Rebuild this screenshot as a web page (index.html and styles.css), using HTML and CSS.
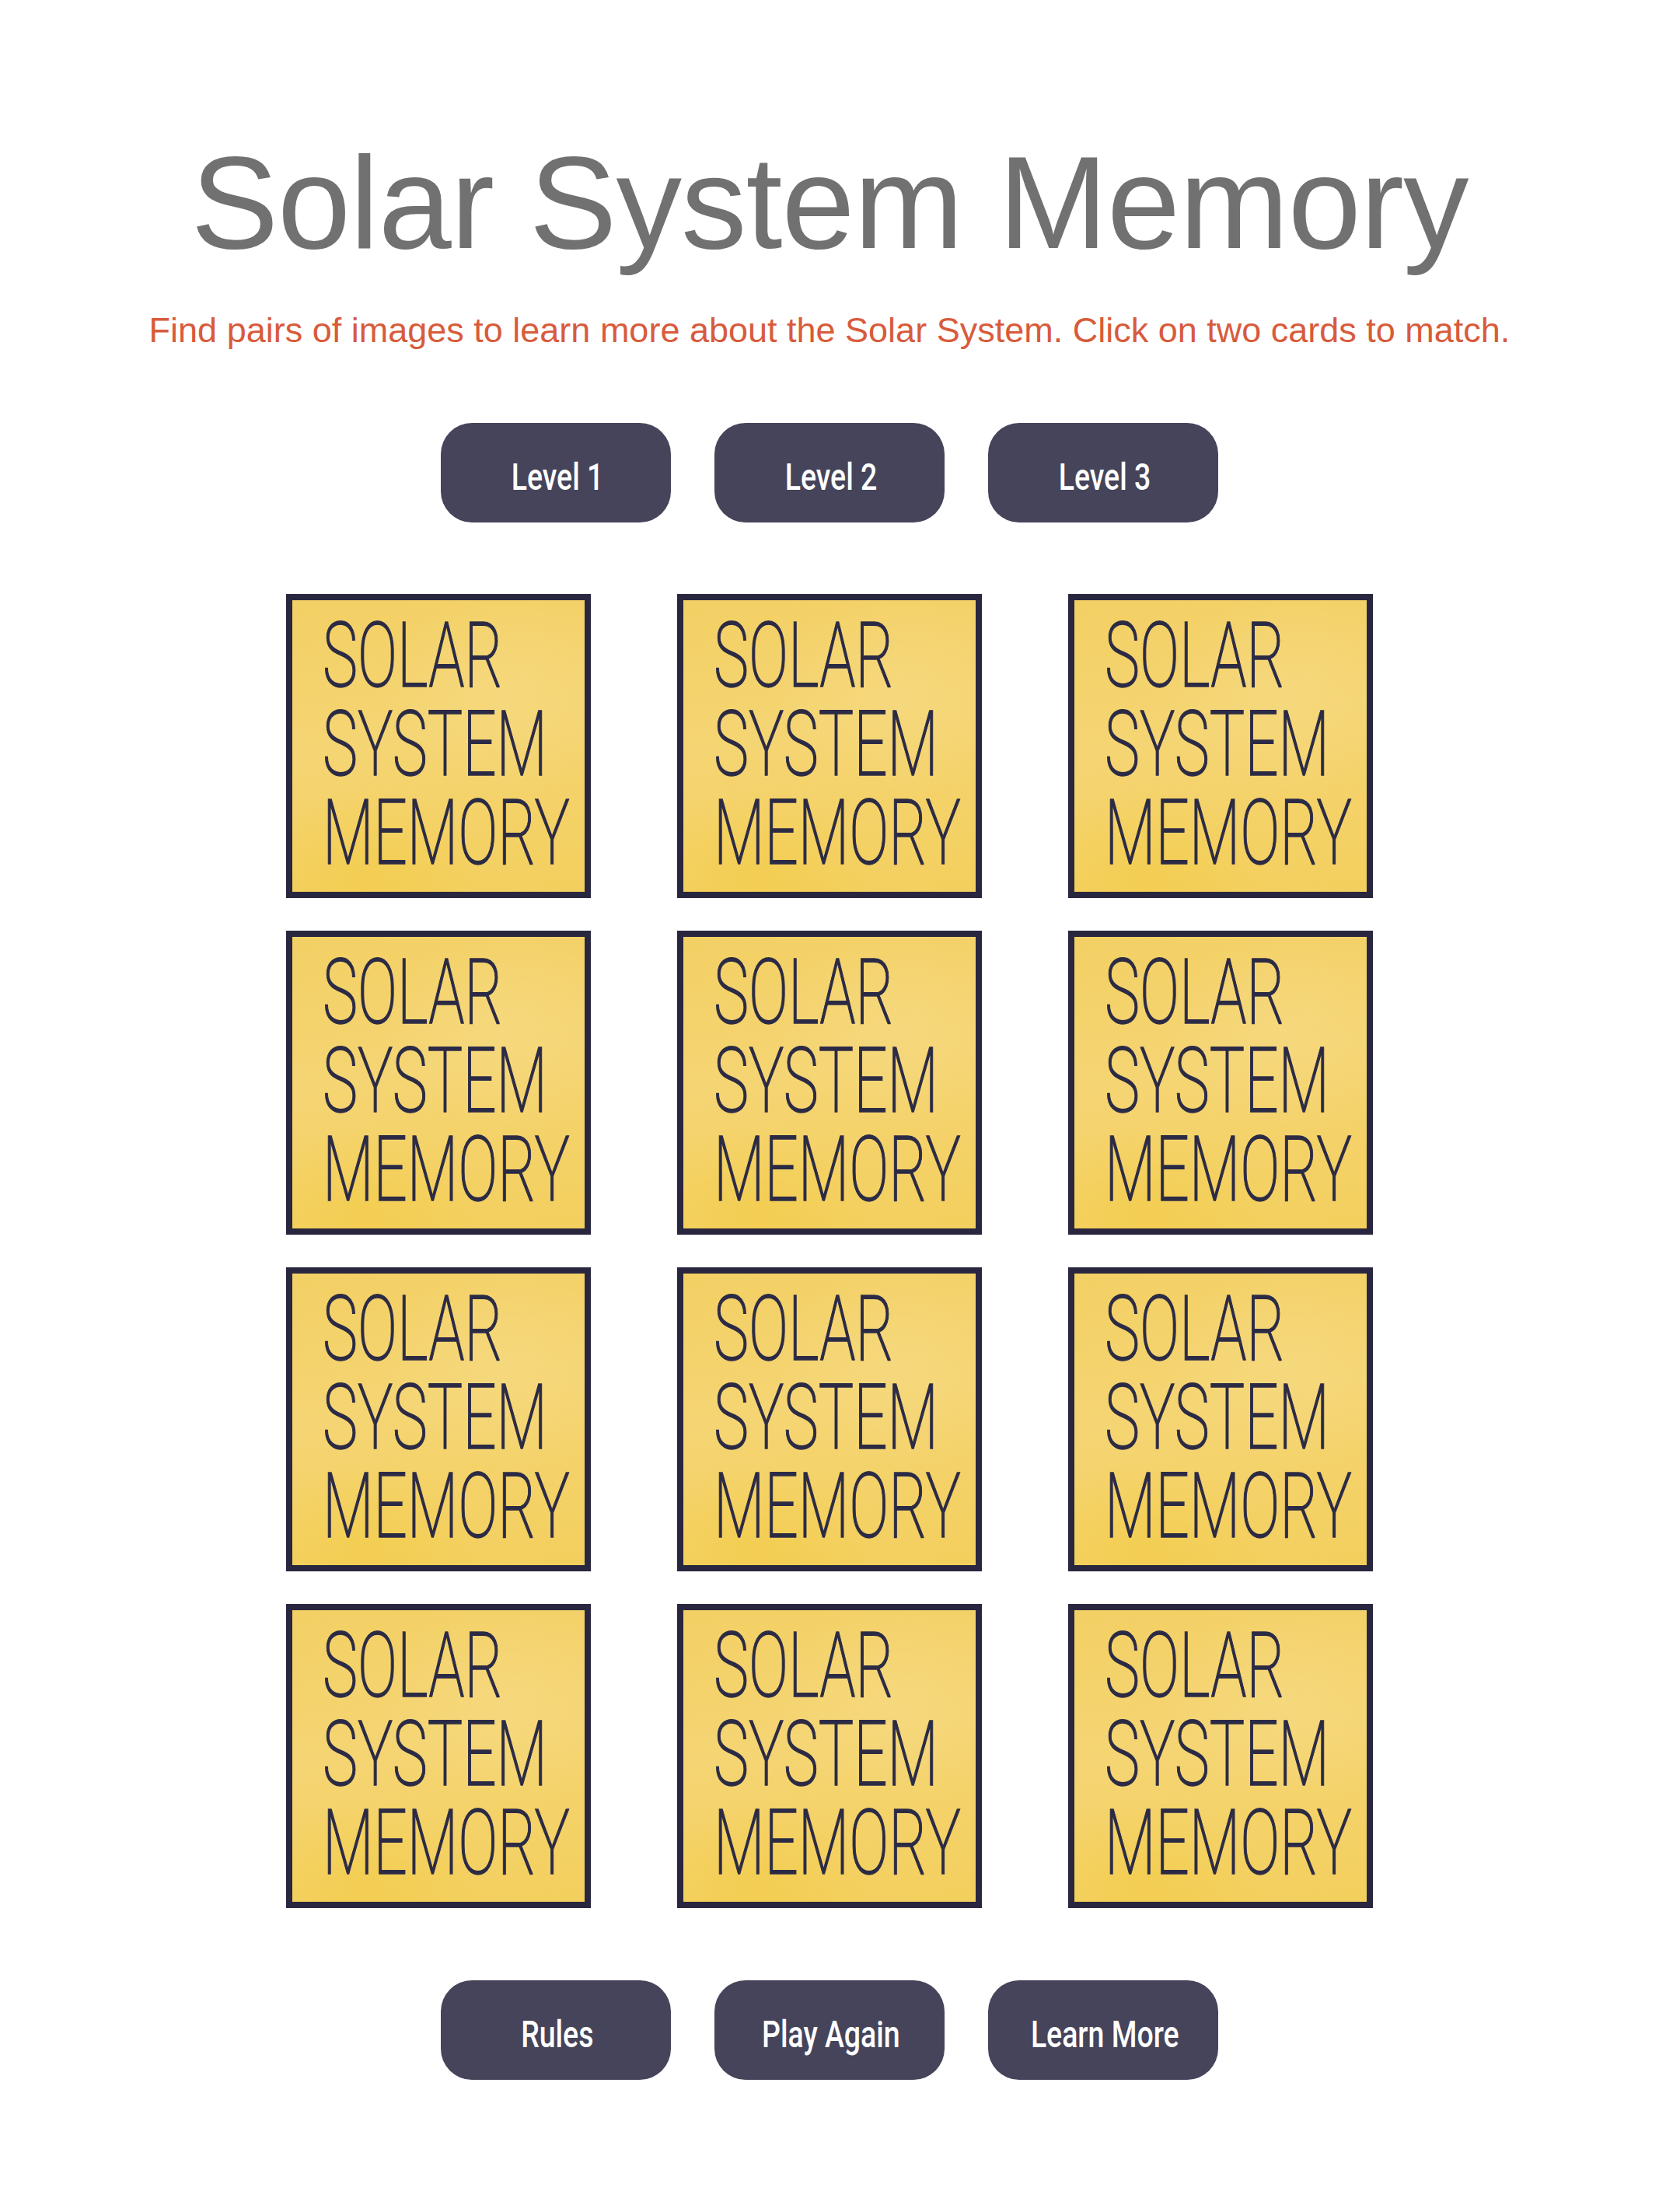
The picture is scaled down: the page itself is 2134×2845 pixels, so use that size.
FILE: index.html
```html
<!DOCTYPE html>
<html lang="en">
<head>
<meta charset="utf-8">
<title>Solar System Memory</title>
<link rel="stylesheet" href="styles.css">
</head>
<body>
<main class="page">
  <header class="header">
    <h1 class="title">Solar System Memory</h1>
    <p class="subtitle">Find pairs of images to learn more about the Solar System. Click on two cards to match.</p>
  </header>

  <nav class="btn-row btn-row-top">
    <button class="btn"><span class="btn-label">Level 1</span></button>
    <button class="btn"><span class="btn-label">Level 2</span></button>
    <button class="btn"><span class="btn-label">Level 3</span></button>
  </nav>

  <section class="board">
    <div class="card"><div class="card-face"><div class="line"><span>SOLAR</span></div><div class="line"><span>SYSTEM</span></div><div class="line"><span>MEMORY</span></div></div></div>
    <div class="card"><div class="card-face"><div class="line"><span>SOLAR</span></div><div class="line"><span>SYSTEM</span></div><div class="line"><span>MEMORY</span></div></div></div>
    <div class="card"><div class="card-face"><div class="line"><span>SOLAR</span></div><div class="line"><span>SYSTEM</span></div><div class="line"><span>MEMORY</span></div></div></div>
    <div class="card"><div class="card-face"><div class="line"><span>SOLAR</span></div><div class="line"><span>SYSTEM</span></div><div class="line"><span>MEMORY</span></div></div></div>
    <div class="card"><div class="card-face"><div class="line"><span>SOLAR</span></div><div class="line"><span>SYSTEM</span></div><div class="line"><span>MEMORY</span></div></div></div>
    <div class="card"><div class="card-face"><div class="line"><span>SOLAR</span></div><div class="line"><span>SYSTEM</span></div><div class="line"><span>MEMORY</span></div></div></div>
    <div class="card"><div class="card-face"><div class="line"><span>SOLAR</span></div><div class="line"><span>SYSTEM</span></div><div class="line"><span>MEMORY</span></div></div></div>
    <div class="card"><div class="card-face"><div class="line"><span>SOLAR</span></div><div class="line"><span>SYSTEM</span></div><div class="line"><span>MEMORY</span></div></div></div>
    <div class="card"><div class="card-face"><div class="line"><span>SOLAR</span></div><div class="line"><span>SYSTEM</span></div><div class="line"><span>MEMORY</span></div></div></div>
    <div class="card"><div class="card-face"><div class="line"><span>SOLAR</span></div><div class="line"><span>SYSTEM</span></div><div class="line"><span>MEMORY</span></div></div></div>
    <div class="card"><div class="card-face"><div class="line"><span>SOLAR</span></div><div class="line"><span>SYSTEM</span></div><div class="line"><span>MEMORY</span></div></div></div>
    <div class="card"><div class="card-face"><div class="line"><span>SOLAR</span></div><div class="line"><span>SYSTEM</span></div><div class="line"><span>MEMORY</span></div></div></div>
  </section>

  <nav class="btn-row btn-row-bottom">
    <button class="btn"><span class="btn-label">Rules</span></button>
    <button class="btn"><span class="btn-label">Play Again</span></button>
    <button class="btn"><span class="btn-label">Learn More</span></button>
  </nav>
</main>
</body>
</html>
```

FILE: styles.css
```css
html, body {
  margin: 0;
  padding: 0;
  background: #ffffff;
}

body {
  font-family: "Liberation Sans", Arial, sans-serif;
}

.page {
  display: flex;
  flex-direction: column;
  align-items: center;
  min-height: 2845px;
  box-sizing: border-box;
  padding-top: 161px;
}

.header {
  display: flex;
  flex-direction: column;
  align-items: center;
}

.title {
  margin: 0;
  font-family: "Liberation Sans", Arial, sans-serif;
  font-weight: 400;
  font-size: 169px;
  line-height: 200px;
  color: #717171;
  letter-spacing: -1px;
}

.subtitle {
  margin: 39px 0 0 0;
  font-size: 45px;
  line-height: 50px;
  color: #d85b3b;
}

.btn-row {
  display: flex;
  gap: 56px;
}

.btn-row-top {
  margin-top: 94px;
}

.btn-row-bottom {
  margin-top: 93px;
}

.btn {
  width: 296px;
  height: 128px;
  border: none;
  border-radius: 40px;
  background: #45445a;
  color: #ffffff;
  display: flex;
  align-items: center;
  justify-content: center;
  padding: 10px 0 0 4px;
  cursor: pointer;
  font-family: Roboto, "Liberation Sans", sans-serif;
  font-weight: 500;
  font-size: 48px;
}

.btn-label {
  display: inline-block;
  transform: scaleX(0.78);
  white-space: nowrap;
}

.board {
  margin-top: 92px;
  display: grid;
  grid-template-columns: repeat(3, 392px);
  grid-auto-rows: 391px;
  column-gap: 111px;
  row-gap: 42px;
}

.card {
  border: 8px solid #29273f;
  background: #f4d264;
  overflow: hidden;
}

.card-face {
  width: 100%;
  height: 100%;
  box-sizing: border-box;
  padding: 14px 0 0 39px;
  background:
    radial-gradient(ellipse 55% 45% at 72% 32%, rgba(246, 218, 130, 0.7), rgba(246, 218, 130, 0) 75%),
    radial-gradient(ellipse 55% 40% at 25% 95%, rgba(243, 204, 70, 0.6), rgba(243, 204, 70, 0) 75%),
    linear-gradient(170deg, #f3d064 0%, #f5d573 45%, #f3cf5d 100%);
  color: #2c2b45;
  font-family: Roboto, "Liberation Sans", sans-serif;
  font-weight: 200;
  font-size: 117px;
  line-height: 114px;
  -webkit-text-stroke: 1.4px #2c2b45;
}

.line {
  white-space: nowrap;
}

.line span {
  display: inline-block;
  transform: scaleX(0.65);
  transform-origin: left center;
}
```
